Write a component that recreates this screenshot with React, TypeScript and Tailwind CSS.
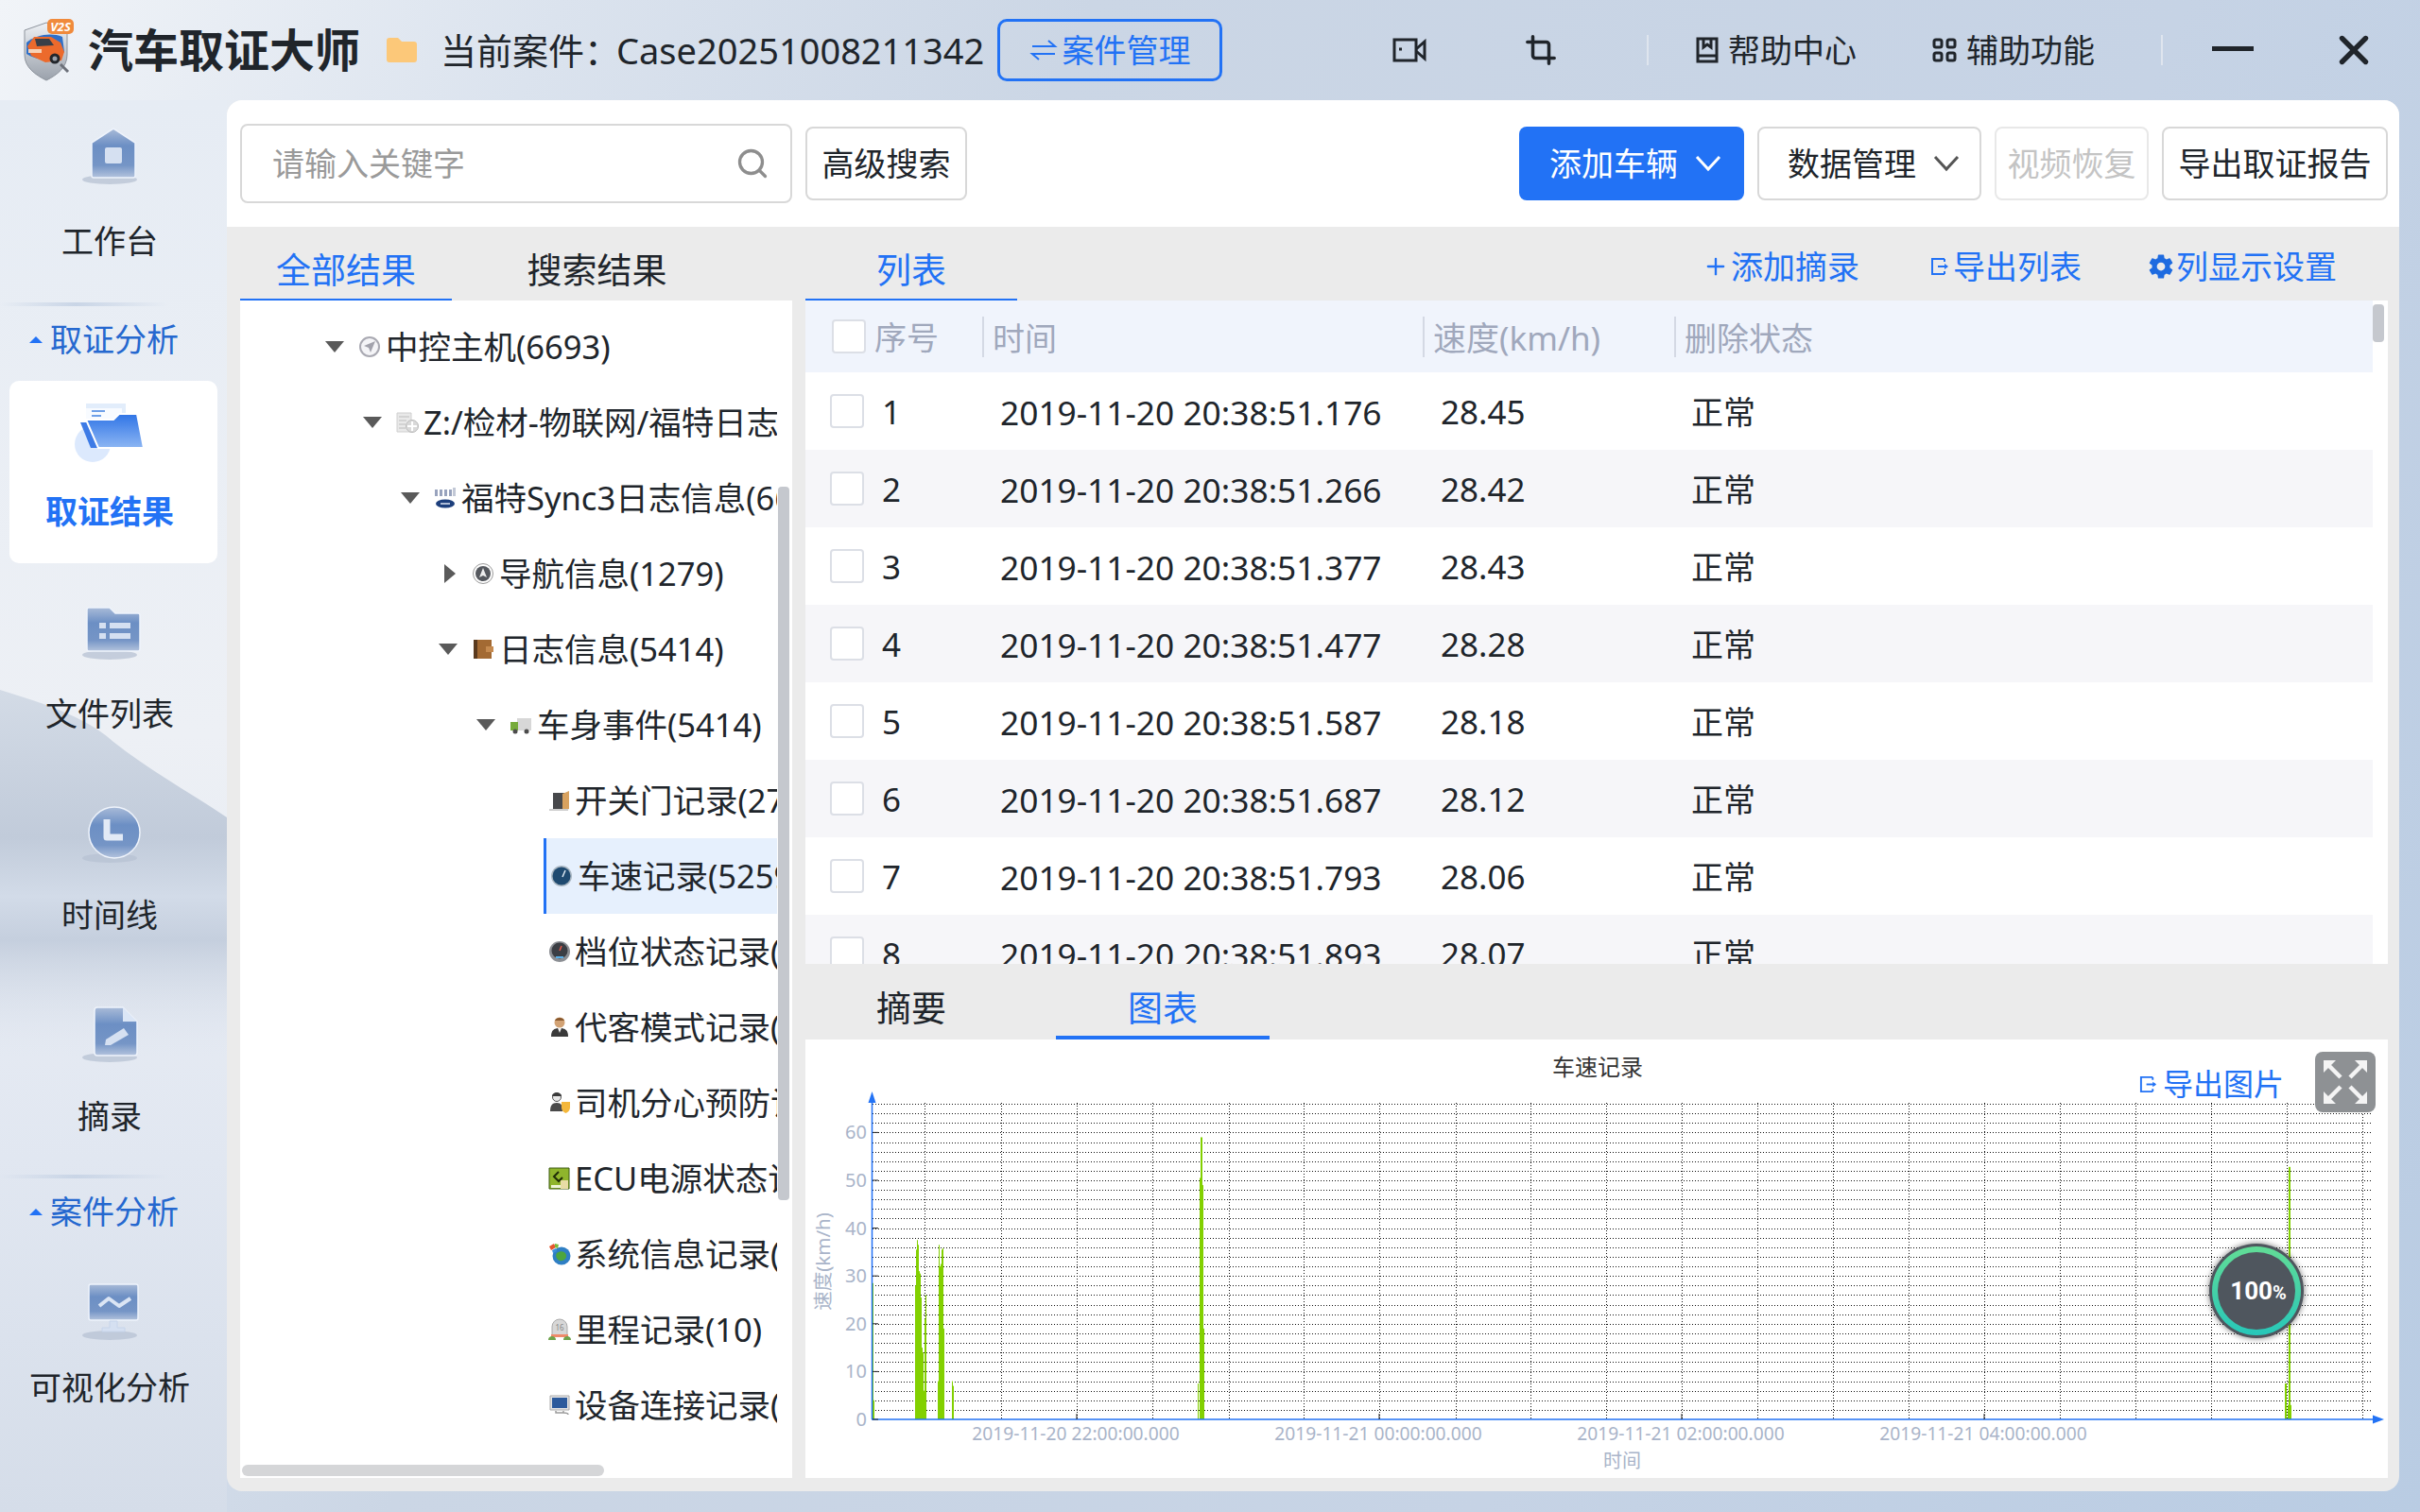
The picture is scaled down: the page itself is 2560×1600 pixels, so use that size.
import React from 'react';
import { Search, Crop, X, Plus } from 'lucide-react';
import { IoSettingsSharp } from 'react-icons/io5';

const rows = [
  ['1', '2019-11-20 20:38:51.176', '28.45'],
  ['2', '2019-11-20 20:38:51.266', '28.42'],
  ['3', '2019-11-20 20:38:51.377', '28.43'],
  ['4', '2019-11-20 20:38:51.477', '28.28'],
  ['5', '2019-11-20 20:38:51.587', '28.18'],
  ['6', '2019-11-20 20:38:51.687', '28.12'],
  ['7', '2019-11-20 20:38:51.793', '28.06'],
  ['8', '2019-11-20 20:38:51.893', '28.07'],
];

const SideIcon = ({ children }: { children: React.ReactNode }) => (
  <svg width="70" height="62" viewBox="0 0 70 62">
    <defs>
      <linearGradient id="sideBlue" x1="0" y1="0" x2="0" y2="1">
        <stop offset="0" stopColor="#a9bbd8" />
        <stop offset="0.35" stopColor="#6c8fc4" />
        <stop offset="0.75" stopColor="#7595c6" />
        <stop offset="1" stopColor="#b3c3dd" />
      </linearGradient>
    </defs>
    <ellipse cx="31" cy="56" rx="29" ry="5" fill="#b7c2d3" opacity="0.75" />
    {children}
  </svg>
);

const edge = { fill: 'url(#sideBlue)', stroke: '#eef3fb', strokeWidth: 1.5 };

const HomeIcon = () => (
  <SideIcon>
    <path d="M12 17 35 2l23 15v35a2 2 0 0 1-2 2H14a2 2 0 0 1-2-2z" {...edge} />
    <rect x="26" y="22" width="18" height="17" rx="2" fill="#d5e0f1" />
  </SideIcon>
);
const ListIcon = () => (
  <SideIcon>
    <path d="M7 8a2 2 0 0 1 2-2h22l6 6h24a2 2 0 0 1 2 2v36a2 2 0 0 1-2 2H9a2 2 0 0 1-2-2z" {...edge} />
    <rect x="20" y="22" width="7" height="6" fill="#d5e0f1" />
    <rect x="31" y="22" width="22" height="6" fill="#d5e0f1" />
    <rect x="20" y="33" width="7" height="6" fill="#d5e0f1" />
    <rect x="31" y="33" width="22" height="6" fill="#d5e0f1" />
  </SideIcon>
);
const ClockIcon = () => (
  <SideIcon>
    <circle cx="36" cy="29" r="27" {...edge} />
    <path d="M28 15v19h17" fill="none" stroke="#e2eaf6" strokeWidth="7" strokeLinejoin="round" />
  </SideIcon>
);
const NoteIcon = () => (
  <SideIcon>
    <path d="M15 6a3 3 0 0 1 3-3h27l15 15v33a3 3 0 0 1-3 3H18a3 3 0 0 1-3-3z" {...edge} />
    <path d="M45 3v15h15z" fill="#dbe6f6" />
    <path d="m27 37 19-12 5 7-19 11h-6z" fill="#d5e0f1" />
  </SideIcon>
);
const ChartIcon = () => (
  <SideIcon>
    <rect x="9" y="2" width="52" height="38" rx="2" {...edge} />
    <path d="M20 25 30 17l11 8 12-8" fill="none" stroke="#dbe5f4" strokeWidth="4" strokeLinejoin="round" />
    <path d="M31 41h8v7h8v4H23v-4h8z" fill="#d5e0f1" stroke="#c6d4ea" />
  </SideIcon>
);
const FolderIcon = () => (
  <svg width="84" height="64" viewBox="0 0 84 64">
    <defs>
      <linearGradient id="folderBlue" x1="0" y1="0" x2="0" y2="1">
        <stop offset="0" stopColor="#2f74e6" />
        <stop offset="1" stopColor="#8db6f3" />
      </linearGradient>
    </defs>
    <circle cx="23" cy="45" r="19" fill="#dce9fd" />
    <path d="M16 2h42v24H16z" fill="#e2edfb" />
    <path d="M16 7h38v18H16z" fill="#f8fbff" />
    <path d="M22 10h14M22 15h10" stroke="#6e9fe8" strokeWidth="2" />
    <path d="M10 22h13l14 27H21z" fill="#3d7be6" />
    <path d="M16 19h29l6-6h19l7 36H29z" fill="url(#folderBlue)" stroke="#fff" strokeWidth="2" />
  </svg>
);

const SideItem = ({ icon, label, cls, gap }: { icon: React.ReactNode; label: string; cls: string; gap: string }) => (
  <div className={`flex flex-col items-center w-[240px] ${cls}`}>
    <div className="h-[62px] flex items-center justify-center">{icon}</div>
    <div className={`text-[34px] leading-[46px] text-[#20252b] -ml-[8px] ${gap}`}>{label}</div>
  </div>
);

const SideDivider = () => (
  <div className="h-[4px] w-[178px] bg-[linear-gradient(90deg,transparent,#c9d5e6_45%,transparent)]" />
);

const SideSection = ({ label }: { label: string }) => (
  <div className="h-[79px] pb-[9px] flex items-center pl-[31px] gap-[8px] text-[34px] text-[#2568cf]">
    <div className="w-0 h-0 border-x-[7px] border-x-transparent border-b-[7px] border-b-[#2272f5]" />
    <span>{label}</span>
  </div>
);

const Chev = ({ color }: { color: string }) => (
  <svg width="28" height="18" viewBox="0 0 28 18" fill="none" stroke={color} strokeWidth="3">
    <path d="m2 2 12 13L26 2" />
  </svg>
);

// Small coloured tree icons
const TreeIcon = ({ kind }: { kind: string }) => {
  switch (kind) {
    case 'nav':
      return (
        <svg width="24" height="24" viewBox="0 0 24 24">
          <circle cx="12" cy="12" r="10" fill="#f4f4f7" stroke="#a9a9b2" strokeWidth="2" />
          <path d="M18 6 6 11l5 2 2 5z" fill="#a2a2ac" />
        </svg>
      );
    case 'disk':
      return (
        <svg width="24" height="24" viewBox="0 0 24 24">
          <path d="M1 2h15v20H1z" fill="#e9e9e9" stroke="#cfcfcf" />
          <path d="M3 6h11M3 10h8M3 14h7M3 18h7" stroke="#bdbdbd" />
          <circle cx="17" cy="16" r="6.500" fill="#d9d9d9" stroke="#bbb" />
          <path d="M17 11v10M12 16h10" stroke="#fff" strokeWidth="2" />
        </svg>
      );
    case 'ford':
      return (
        <svg width="24" height="24" viewBox="0 0 24 24">
          <path d="M1 3h3v7H1zM6 3h3v7H6zM11 3h3v7h-3zM16 3h3v7h-3z" fill="#98a3bd" />
          <path d="M20 1h3v9h-3z" fill="#c2c8d6" />
          <ellipse cx="12" cy="18" rx="10" ry="4.500" fill="#1d3f7c" />
          <path d="M7 18h10" stroke="#dfe7f4" strokeWidth="1.500" />
        </svg>
      );
    case 'compass':
      return (
        <svg width="24" height="24" viewBox="0 0 24 24">
          <circle cx="12" cy="12" r="10.500" fill="#fff" stroke="#9a9a9a" />
          <circle cx="12" cy="12" r="8" fill="#55585e" />
          <path d="m12 6 4 10-4-2-4 2z" fill="#eee" />
        </svg>
      );
    case 'book':
      return (
        <svg width="24" height="24" viewBox="0 0 24 24">
          <path d="M2 2h19v20H2z" fill="#a36a33" />
          <path d="M2 2h4v20H2z" fill="#5a3a1e" />
          <path d="M15 9h8v6h-8z" fill="#c58a4f" />
        </svg>
      );
    case 'truck':
      return (
        <svg width="24" height="24" viewBox="0 0 24 24">
          <path d="M8 5h15v13H8z" fill="#d7d7d7" />
          <path d="M1 9h8v9H1z" fill="#76ab3a" />
          <circle cx="6" cy="19" r="2.500" fill="#4c4c4c" />
          <circle cx="18" cy="19" r="2.500" fill="#4c4c4c" />
        </svg>
      );
    case 'door':
      return (
        <svg width="24" height="24" viewBox="0 0 24 24">
          <path d="M5 4h13v17H5z" fill="#47484b" />
          <path d="M15 5 22 2v19l-7 2z" fill="#d9a25f" />
          <path d="M1 21h20v2H1z" fill="#cfcfcf" />
        </svg>
      );
    case 'speed':
      return (
        <svg width="24" height="24" viewBox="0 0 24 24">
          <circle cx="12" cy="12" r="11" fill="#a9b6c1" />
          <circle cx="12" cy="12" r="9.500" fill="#1f4a70" />
          <path d="m16 6-3 7" stroke="#dfe9f2" strokeWidth="1.500" />
        </svg>
      );
    case 'gear':
      return (
        <svg width="24" height="24" viewBox="0 0 24 24">
          <circle cx="12" cy="12" r="11" fill="#8c8f94" />
          <circle cx="12" cy="11" r="8.500" fill="#3b3e44" />
          <path d="m14 6-2 5" stroke="#e85a4a" strokeWidth="1.500" />
          <path d="M8 18h8" stroke="#5ab0e8" strokeWidth="2" />
        </svg>
      );
    case 'man':
      return (
        <svg width="24" height="24" viewBox="0 0 24 24">
          <circle cx="12" cy="7" r="5.500" fill="#d2a274" />
          <path d="M7 5c1-4 9-4 10 0z" fill="#8a5a2f" />
          <path d="M3 22c0-7 3-9 9-9s9 2 9 9z" fill="#3a3a3a" />
          <path d="M10 13h4l-2 5z" fill="#f2f2f2" />
        </svg>
      );
    case 'driver':
      return (
        <svg width="24" height="24" viewBox="0 0 24 24">
          <circle cx="9" cy="6" r="4.500" fill="#e8e8e8" stroke="#555" />
          <path d="M4 5c0-5 10-5 10 0z" fill="#3a3a3a" />
          <path d="M2 21c0-6 2-9 7-9s6 3 6 9z" fill="#4a4a4a" />
          <path d="M14 11h9v6c0 3-2 5-4.500 6C16 22 14 20 14 17z" fill="#f4b73b" />
        </svg>
      );
    case 'ecu':
      return (
        <svg width="24" height="24" viewBox="0 0 24 24">
          <path d="M1 1h21v22H1z" fill="#8fb52c" stroke="#3d5a12" />
          <path d="m11 5-5 5 5 5 4-4" fill="none" stroke="#1f2c07" strokeWidth="2" />
          <path d="M13 14h8v9h-8z" fill="#e8dca5" />
          <path d="M3 19h10v3H3z" fill="#eef5d8" />
        </svg>
      );
    case 'globe':
      return (
        <svg width="24" height="24" viewBox="0 0 24 24">
          <circle cx="14" cy="14" r="9.500" fill="#2f7fc4" />
          <path d="M9 11c4-3 9-2 10 2s-4 7-7 6-5-5-3-8z" fill="#4da63e" />
          <path d="M1 4 6 1l2 4-5 3z" fill="#e5562e" />
          <path d="M7 1l4 1-1 4-3-1z" fill="#7bb83a" />
          <path d="M4 8l4-2 1 3-4 2z" fill="#3a8fdd" />
        </svg>
      );
    case 'odo':
      return (
        <svg width="24" height="24" viewBox="0 0 24 24">
          <path d="M4 18V9a8 8 0 0 1 16 0v9z" fill="#d7d7d7" stroke="#aaa" />
          <text x="12" y="13" fontSize="8" textAnchor="middle" fill="#888">16</text>
          <path d="M3 17h18v3H3z" fill="#ef8a6b" />
          <path d="M0 23c0-3 2-4 4-4s4 1 4 4zM16 23c0-3 2-4 4-4s4 1 4 4z" fill="#6ea34b" />
        </svg>
      );
    default:
      return (
        <svg width="24" height="24" viewBox="0 0 24 24">
          <path d="M2 2h20v15H2z" fill="#e4e4e4" stroke="#aaa" />
          <path d="M4 4h16v11H4z" fill="#2c5a9c" />
          <path d="M8 18v2h8v-2M16 20c3 0 5 0 5 2" fill="none" stroke="#9a9a9a" strokeWidth="1.500" />
        </svg>
      );
  }
};

const tree = [
  { depth: 0, arrow: 'down', icon: 'nav', text: '中控主机(6693)' },
  { depth: 1, arrow: 'down', icon: 'disk', text: 'Z:/检材-物联网/福特日志' },
  { depth: 2, arrow: 'down', icon: 'ford', text: '福特Sync3日志信息(6693)' },
  { depth: 3, arrow: 'right', icon: 'compass', text: '导航信息(1279)' },
  { depth: 3, arrow: 'down', icon: 'book', text: '日志信息(5414)' },
  { depth: 4, arrow: 'down', icon: 'truck', text: '车身事件(5414)' },
  { depth: 5, icon: 'door', text: '开关门记录(27' },
  { depth: 5, icon: 'speed', text: '车速记录(5259)', active: true },
  { depth: 5, icon: 'gear', text: '档位状态记录(' },
  { depth: 5, icon: 'man', text: '代客模式记录(' },
  { depth: 5, icon: 'driver', text: '司机分心预防记录(' },
  { depth: 5, icon: 'ecu', text: 'ECU电源状态记录(' },
  { depth: 5, icon: 'globe', text: '系统信息记录(' },
  { depth: 5, icon: 'odo', text: '里程记录(10)' },
  { depth: 5, icon: 'pc', text: '设备连接记录(' },
];

const TreeRow = ({ item }: { item: (typeof tree)[number] }) => {
  if (item.depth === 5) {
    return (
      <div
        className={`h-[80px] w-[247px] ml-[321px] flex items-center whitespace-nowrap overflow-hidden ${
          item.active ? 'bg-[#e6f0fd] border-l-[3px] border-[#2272f5] pl-[4px] gap-[5px]' : 'pl-[5px] gap-[4px]'
        }`}
      >
        <span className="shrink-0 w-[24px] h-[24px]">
          <TreeIcon kind={item.icon} />
        </span>
        <span>{item.text}</span>
      </div>
    );
  }
  return (
    <div className="h-[80px] flex items-center whitespace-nowrap" style={{ paddingLeft: 90 + item.depth * 40 }}>
      <span className="w-[35px] shrink-0">
        {item.arrow === 'down' ? (
          <div className="w-0 h-0 border-x-[10px] border-x-transparent border-t-[12px] border-t-[#5a5a5a]" />
        ) : (
          <div className="ml-[6px] w-0 h-0 border-y-[10px] border-y-transparent border-l-[12px] border-l-[#5a5a5a]" />
        )}
      </span>
      <span className="shrink-0 w-[24px] h-[24px]">
        <TreeIcon kind={item.icon} />
      </span>
      <span className="ml-[5px]">{item.text}</span>
    </div>
  );
};

const ExportIcon = ({ size = 20 }: { size?: number }) => (
  <svg width={size} height={size} viewBox="0 0 20 20" fill="none" stroke="#2272f5" strokeWidth="2">
    <path d="M15 2H2v16h13M15 2v3M15 15v3" />
    <path d="M8 10h10" />
    <path d="m15 7 4 3-4 3z" fill="#2272f5" stroke="none" />
  </svg>
);

// green spikes: [x, speed]
const spikes: [number, number][] = [
  [922, 28.5], [923, 4], [967, 28], [968, 35.5], [969, 37.5], [970, 36.5], [971, 31], [972, 30.5], [973, 25.5], [974, 15],
  [975, 14], [976, 6], [977, 21], [978, 26], [991, 8], [992, 36.5], [993, 32], [994, 32.5], [995, 35.5], [996, 35.8],
  [997, 19], [1006, 8], [1007, 7], [1266, 7.5], [1268, 50.5], [1269, 59], [1270, 59], [1271, 49], [1272, 19],
  [2416, 7.5], [2417, 7.5], [2419, 3], [2420, 52.8], [2421, 52.8], [2422, 3],
];

const Chart = () => {
  const y0 = 1502;
  const unit = 5.06;
  const vLines = [977, 1058, 1138, 1218, 1299, 1378, 1458, 1539];
  for (let x = 1618; x <= 2498; x += 80) vLines.push(x);
  const hLines: number[] = [];
  for (let y = y0 - 10.12; y >= 1166; y -= 10.12) hLines.push(Math.round(y) + 0.5);
  const xLabels: [number, string][] = [
    [1137, '2019-11-20 22:00:00.000'],
    [1457, '2019-11-21 00:00:00.000'],
    [1777, '2019-11-21 02:00:00.000'],
    [2097, '2019-11-21 04:00:00.000'],
  ];
  return (
    <svg width="1675" height="464" viewBox="851 1100 1675 464" className="block">
      <text x="1689" y="1138" fontSize="24" textAnchor="middle" fill="#333">车速记录</text>
      {hLines.map((y) => (
        <line key={y} x1="922" x2="2509" y1={y} y2={y} stroke="#111" strokeWidth="1" strokeDasharray="1 2" />
      ))}
      {vLines.map((x) => (
        <line key={x} x1={x + 0.5} x2={x + 0.5} y1="1167" y2={y0} stroke="#111" strokeWidth="1" strokeDasharray="1 2" />
      ))}
      {spikes.map(([x, v]) => (
        <line key={x} x1={x + 0.5} x2={x + 0.5} y1={y0} y2={y0 - v * unit} stroke="#82d000" strokeWidth="1" />
      ))}
      <line x1="921.500" x2="921.500" y1="1160" y2={y0} stroke="#2272f5" strokeWidth="1.500" />
      <line x1="921" x2="2512" y1={y0} y2={y0} stroke="#2272f5" strokeWidth="1.500" />
      <path d="M921.500 1155l-4 12h8z" fill="#2272f5" />
      <path d="M2521 1502l-12-4.500v9z" fill="#2272f5" />
      {[0, 10, 20, 30, 40, 50, 60].map((v) => (
        <g key={v}>
          <line x1="922" x2="928" y1={y0 - v * unit} y2={y0 - v * unit} stroke="#222" strokeWidth="1" />
          <text x="916" y={y0 - v * unit + 7} fontSize="20" textAnchor="end" fill="#a9b4c9">{v}</text>
        </g>
      ))}
      {xLabels.map(([x, t]) => (
        <g key={x}>
          <line x1={x + 1} x2={x + 1} y1={y0 - 6} y2={y0} stroke="#222" strokeWidth="1" />
          <text x={x} y="1524" fontSize="19.200" textAnchor="middle" fill="#a9b4c9">{t}</text>
        </g>
      ))}
      <text x="1715" y="1553" fontSize="20" textAnchor="middle" fill="#a9b4c9">时间</text>
      <text x="870" y="1342" fontSize="20.500" textAnchor="middle" fill="#a9b4c9" transform="rotate(-90 870 1335)">速度(km/h)</text>
    </svg>
  );
};

const App: React.FC = () => {
  return (
    <div className="relative w-[2560px] h-[1600px] overflow-hidden font-['Noto_Sans','Noto_Sans_CJK_SC',sans-serif] text-[#20252b] bg-[linear-gradient(115deg,#f1f4f8_0%,#dbe3ee_18%,#cbd6e5_35%,#c6d3e5_70%,#b9cce3_100%)]">
      {/* backdrop wave behind the sidebar */}
      <svg className="absolute left-0 top-0" width="240" height="1600" viewBox="0 0 240 1600">
        <defs>
          <linearGradient id="sideBg" x1="0" y1="0" x2="0" y2="1">
            <stop offset="0" stopColor="#e6ecf4" />
            <stop offset="0.45" stopColor="#edf0f5" />
            <stop offset="0.75" stopColor="#e1e7f1" />
            <stop offset="1" stopColor="#d5dde9" />
          </linearGradient>
          <linearGradient id="waveBg" x1="0" y1="730" x2="0" y2="1120" gradientUnits="userSpaceOnUse">
            <stop offset="0" stopColor="#d3dbe6" />
            <stop offset="0.4" stopColor="#c1cbda" />
            <stop offset="0.56" stopColor="#d2dbe8" />
            <stop offset="0.68" stopColor="#c5cfde" />
            <stop offset="1" stopColor="#dfe5ef" stopOpacity="0" />
          </linearGradient>
        </defs>
        <rect x="0" y="106" width="240" height="1494" fill="url(#sideBg)" />
        <path d="M0 730c45 14 90 28 120 55 35 28 75 50 120 80v255H0z" fill="url(#waveBg)" />
      </svg>

      {/* title bar */}
      <div className="relative h-[106px] flex items-center whitespace-nowrap">
        <svg className="ml-[22px] shrink-0" width="56" height="68" viewBox="0 0 56 68">
          <defs>
            <linearGradient id="shieldFill" x1="0" y1="0" x2="0" y2="1">
              <stop offset="0" stopColor="#eef1f5" />
              <stop offset="1" stopColor="#9aa1ab" />
            </linearGradient>
          </defs>
          <path d="M4 13 27 5l22 8v26c0 13-10 21-22 27C15 60 4 52 4 39z" fill="url(#shieldFill)" stroke="#8d939c" />
          <path d="M6 26c10-8 26-11 38-6l2 16c-10 10-28 10-40 2z" fill="#2f70c9" />
          <path d="M7 30 14 20h18l10 6 4 10-3 9-17 2-15-7z" fill="#ec6a2c" />
          <path d="M15 22h15l5 7-18 1z" fill="#3a3f48" />
          <path d="M8 33h14v4H8z" fill="#f7d3b8" />
          <circle cx="36" cy="43" r="5.500" fill="#22262b" />
          <circle cx="36" cy="43" r="2.500" fill="#9aa1ab" />
          <path d="m42 49 8 8" stroke="#6c7079" strokeWidth="3" />
          <rect x="28" y="1" width="28" height="16" rx="5" fill="#f08a3c" />
          <text x="42" y="14" fontSize="13" fontWeight="700" fontStyle="italic" textAnchor="middle" fill="#fff">V2S</text>
        </svg>
        <div className="ml-[15px] w-[288px] text-[48px] font-bold leading-none">汽车取证大师</div>
        <svg className="ml-[28px] shrink-0" width="32" height="26" viewBox="0 0 32 26">
          <path d="M0 3a3 3 0 0 1 3-3h9l4 4h13a3 3 0 0 1 3 3v16a3 3 0 0 1-3 3H3a3 3 0 0 1-3-3z" fill="#fcc879" />
        </svg>
        <div className="ml-[25px] w-[589px] text-[38px]">当前案件：<span className="-ml-[4px]">Case20251008211342</span></div>
        <button className="w-[238px] h-[66px] border-[3px] border-[#2272f5] rounded-[10px] flex items-center justify-center gap-[5px] text-[34px] text-[#2272f5]">
          <svg width="30" height="28" viewBox="0 0 30 28" fill="none" stroke="#2272f5" strokeWidth="2">
            <path d="M3 10h24l-7-6M27 18H3l7 6" />
          </svg>
          案件管理
        </button>
        <svg className="ml-[180px] shrink-0" width="36" height="26" viewBox="0 0 36 26" fill="none" stroke="#20252b" strokeWidth="3">
          <rect x="2" y="2" width="23" height="22" />
          <path d="m25 12 9-8v18l-9-8" />
          <path d="M7 12h3" />
        </svg>
        <Crop className="ml-[104px] shrink-0" size={34} strokeWidth={2.500} color="#20252b" />
        <div className="ml-[95px] w-[2px] h-[32px] bg-[#dfe5ee]" />
        <svg className="ml-[50px] shrink-0" width="24" height="28" viewBox="0 0 24 28" fill="none" stroke="#20252b" strokeWidth="3">
          <path d="M2 2h20v24H2zM2 20h20M8 2v9l4-3 4 3V2" />
        </svg>
        <div className="ml-[10px] text-[34px]">帮助中心</div>
        <svg className="ml-[80px] shrink-0" width="26" height="26" viewBox="0 0 26 26" fill="none" stroke="#20252b" strokeWidth="3">
          <rect x="2" y="2" width="8" height="8" rx="2" />
          <rect x="16" y="2" width="8" height="8" rx="2" />
          <rect x="2" y="16" width="8" height="8" rx="2" />
          <rect x="16" y="16" width="8" height="8" rx="2" />
        </svg>
        <div className="ml-[10px] text-[34px]">辅助功能</div>
        <div className="ml-[70px] w-[2px] h-[32px] bg-[#dfe5ee]" />
        <div className="ml-[52px] w-[44px] h-[5px] bg-[#20252b] -mt-[4px]" />
        <X className="ml-[81px] shrink-0" size={50} strokeWidth={2.600} color="#20252b" />
      </div>

      <div className="relative flex">
        {/* sidebar */}
        <div className="w-[240px] shrink-0">
          <SideItem icon={<HomeIcon />} label="工作台" gap="mt-[36px]" cls="h-[214px] pt-[28px]" />
          <SideDivider />
          <SideSection label="取证分析" />
          <div className="ml-[10px] w-[220px] h-[193px] bg-white rounded-[10px] flex flex-col items-center pt-[22px]">
            <div className="h-[64px] -ml-[6px]"><FolderIcon /></div>
            <div className="mt-[29px] -ml-[8px] text-[34px] leading-[46px] font-bold text-[#2272f5]">取证结果</div>
          </div>
          <div className="h-[8px]" />
          <SideItem icon={<ListIcon />} label="文件列表" gap="mt-[33px]" cls="h-[213px] pt-[33px]" />
          <SideItem icon={<ClockIcon />} label="时间线" gap="mt-[31px]" cls="h-[213px] pt-[35px]" />
          <SideItem icon={<NoteIcon />} label="摘录" gap="mt-[33px]" cls="h-[213px] pt-[33px]" />
          <SideDivider />
          <SideSection label="案件分析" />
          <SideItem icon={<ChartIcon />} label="可视化分析" gap="mt-[26px]" cls="pt-[31px]" />
        </div>

        {/* main panel */}
        <div className="w-[2298px] h-[1472px] rounded-[16px] bg-[#ebebeb] overflow-hidden">
          <div className="h-[134px] bg-white flex items-center pl-[14px] text-[34px] whitespace-nowrap">
            <div className="w-[584px] h-[84px] border-2 border-[#d8d8d8] rounded-[8px] flex items-center pl-[32px] pr-[22px] text-[#9a9a9a]">
              <span className="flex-1">请输入关键字</span>
              <Search size={36} strokeWidth={2.200} color="#8e8e8e" />
            </div>
            <button className="ml-[14px] w-[171px] h-[78px] border-2 border-[#d8d8d8] rounded-[8px]">高级搜索</button>
            <button className="ml-[584px] w-[238px] h-[78px] bg-[#2272f5] rounded-[8px] text-white flex items-center pl-[32px] gap-[18px]">
              添加车辆
              <Chev color="#ffffff" />
            </button>
            <button className="ml-[14px] w-[237px] h-[78px] border-2 border-[#d8d8d8] rounded-[8px] flex items-center pl-[30px] gap-[18px]">
              数据管理
              <Chev color="#555555" />
            </button>
            <button className="ml-[14px] w-[163px] h-[78px] border-2 border-[#e8e8e8] rounded-[8px] text-[#c4c4c4]">视频恢复</button>
            <button className="ml-[14px] w-[239px] h-[78px] border-2 border-[#d8d8d8] rounded-[8px]">导出取证报告</button>
          </div>

          <div className="flex pl-[14px] gap-[14px]">
            {/* tree column */}
            <div className="w-[584px] shrink-0">
              <div className="h-[78px] flex text-[37px]">
                <div className="w-[224px] h-[80px] pt-[18px] text-center text-[#2272f5] border-b-[4px] border-[#2272f5] relative">全部结果</div>
                <div className="w-[232px] pt-[18px] pl-[75px] text-center whitespace-nowrap">搜索结果</div>
              </div>
              <div className="relative h-[1246px] bg-white overflow-hidden">
                <div className="w-[568px] h-[1236px] pt-[9px] text-[34.5px] leading-[46px] overflow-hidden">
                  {tree.map((item) => (
                    <TreeRow key={item.text} item={item} />
                  ))}
                </div>
                <div className="absolute left-[569px] top-[197px] w-[12px] h-[755px] rounded-[4px] bg-[#c5c8ce]" />
                <div className="absolute left-[2px] bottom-[2px] w-[383px] h-[12px] rounded-[6px] bg-[#d5d6d8]" />
              </div>
            </div>

            {/* right column */}
            <div className="w-[1674px] shrink-0">
              <div className="h-[78px] flex text-[37px]">
                <div className="w-[224px] h-[80px] pt-[18px] text-center text-[#2272f5] border-b-[4px] border-[#2272f5] relative">列表</div>
                <div className="ml-auto mr-[54px] pt-[5px] flex text-[34px] text-[#2272f5] leading-[46px]">
                  <div className="flex items-center gap-[2px]"><Plus size={28} strokeWidth={2} />添加摘录</div>
                  <div className="ml-[75px] flex items-center gap-[4px]"><ExportIcon size={20} />导出列表</div>
                  <div className="ml-[70px] flex items-center gap-[2px]"><IoSettingsSharp size={28} color="#1e6be0" />列显示设置</div>
                </div>
              </div>
              <div className="relative h-[702px] bg-white overflow-hidden">
                <div className="w-[1658px] h-[76px] bg-[#f0f4fc] flex items-center text-[34px] text-[#a0a8bc]">
                  <div className="ml-[28px] w-[36px] h-[36px] bg-white border-2 border-[#dcdfe6] rounded-[4px]" />
                  <div className="ml-[9px] w-[114px] pt-[3px]">序号</div>
                  <div className="w-[466px] pl-[9px] pt-[3px] border-l-2 border-[#d4d9e4] leading-[40px]">时间</div>
                  <div className="w-[266px] pl-[9px] pt-[3px] border-l-2 border-[#d4d9e4] leading-[40px] text-[35px]">速度(km/h)</div>
                  <div className="pl-[9px] pt-[3px] border-l-2 border-[#d4d9e4] leading-[40px]">删除状态</div>
                </div>
                {rows.map((r, i) => (
                  <div key={r[0]} className={`w-[1658px] h-[82px] flex items-center text-[35px] ${i % 2 === 1 ? 'bg-[#f6f6f9]' : 'bg-white'}`}>
                    <div className="ml-[26px] w-[36px] h-[36px] bg-white border-2 border-[#dcdfe6] rounded-[4px]" />
                    <div className="ml-[19px] w-[125px] pt-[2px]">{r[0]}</div>
                    <div className="w-[466px] pt-[2px] text-[35.3px]">{r[1]}</div>
                    <div className="w-[265px] pt-[2px]">{r[2]}</div>
                    <div className="text-[34px] pt-[2px]">正常</div>
                  </div>
                ))}
                <div className="absolute left-[1658px] top-[4px] w-[12px] h-[40px] rounded-[4px] bg-[#c5c8ce]" />
              </div>
              <div className="h-[80px] flex text-[37px]">
                <div className="w-[224px] pt-[19px] text-center">摘要</div>
                <div className="ml-[41px] w-[226px] h-[80px] pt-[19px] text-center text-[#2272f5] border-b-[4px] border-[#2272f5]">图表</div>
              </div>
              <div className="relative h-[464px] bg-white overflow-hidden">
                <Chart />
                <div className="absolute left-[1411px] top-[24px] flex items-center gap-[6px] text-[32px] leading-[46px] text-[#2272f5]">
                  <ExportIcon size={19} />
                  导出图片
                </div>
                <div className="absolute left-[1597px] top-[13px] w-[64px] h-[64px] rounded-[8px] bg-[#8e9194] flex items-center justify-center">
                  <svg width="52" height="52" viewBox="0 0 52 52" fill="none" stroke="#f4f4f4" strokeWidth="4.500">
                    <path d="M5 5 21 21M31 21 47 5M5 47l16-16M31 31l16 16" />
                    <path d="M3 3h13L3 16zM49 3H36l13 13zM3 49h13L3 36zM49 49H36l13-13z" fill="#f4f4f4" stroke="none" />
                  </svg>
                </div>
                <div className="absolute left-[1485px] top-[216px] w-[100px] h-[100px] rounded-full bg-[#4f565e] shadow-[0_0_6px_rgba(0,0,0,0.55)] flex items-center justify-center">
                  <div className="absolute inset-[3px] rounded-full p-[6px] bg-[linear-gradient(180deg,#62dc96,#27c7b9)]">
                    <div className="w-full h-full rounded-full bg-[#4f565e]" />
                  </div>
                  <div className="relative ml-[4px] text-white font-bold text-[26px] leading-none font-['Roboto',sans-serif]">
                    100<span className="text-[20px]">%</span>
                  </div>
                </div>
              </div>
            </div>
          </div>
        </div>
      </div>
    </div>
  );
};

export default App;
